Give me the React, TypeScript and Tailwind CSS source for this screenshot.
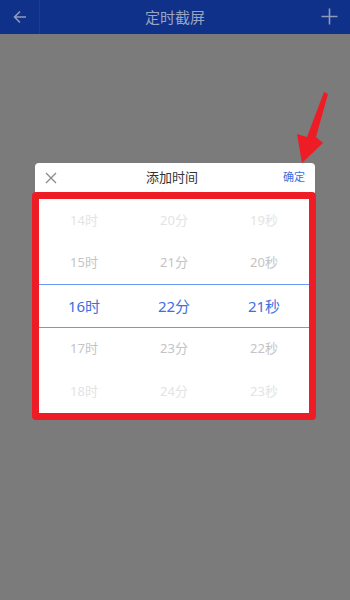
import React from "react";

const rows = [
  ["14时", "20分", "19秒"],
  ["15时", "21分", "20秒"],
  ["16时", "22分", "21秒"],
  ["17时", "23分", "22秒"],
  ["18时", "24分", "23秒"],
];

const rowStyle = [
  "h-[43px] text-[13px] text-[#e4e4e4]",
  "h-[42px] text-[13px] text-[#c4c4c4]",
  "h-[42px] text-[15px] text-[#3b70e0]",
  "h-[42px] text-[13px] text-[#c4c4c4]",
  "h-[43px] text-[13px] text-[#e4e4e4]",
];

export default function App() {
  return (
    <div
      className="relative flex h-[600px] w-[350px] flex-col overflow-hidden bg-[#7b7b7b]"
      style={{ fontFamily: '"Noto Sans", "Noto Sans CJK SC", sans-serif' }}
    >
      <header className="flex h-[34px] items-center bg-[#0f318a]">
        <div className="flex h-full w-[40px] items-center justify-center border-r border-[#1c3c92]">
          <svg width="16" height="16" viewBox="0 0 16 16" fill="none" stroke="#8e9bbd" strokeWidth="1.6">
            <path d="M14 8H2.5M8 2.5 2.5 8 8 13.5" />
          </svg>
        </div>
        <h1 className="flex-1 pr-[40px] text-center text-[15px] text-[#9aa4c2]">定时截屏</h1>
        <div className="absolute right-[12px] top-[8px]">
          <svg width="17" height="17" viewBox="0 0 17 17" fill="none" stroke="#8e9bbd" strokeWidth="1.6">
            <path d="M8.5 0.5v16M0.5 8.5h16" />
          </svg>
        </div>
      </header>

      <div className="ml-[35px] mt-[129px] w-[280px] rounded-[4px] bg-white">
        <div className="flex h-[29px] items-center px-[10px]">
          <svg width="12" height="12" viewBox="0 0 12 12" stroke="#8a8a8a" strokeWidth="1.3">
            <path d="M1 1l10 10M11 1 1 11" />
          </svg>
          <span className="flex-1 pl-[4px] text-center text-[13px] text-[#333]">添加时间</span>
          <span className="text-[11px] text-[#3b70e0]">确定</span>
        </div>
        <div className="-ml-[3px] -mr-[1px] mb-[-2px] rounded-[4px] border-[7px] border-[#ee1c25] bg-white">
          {rows.map((row, ri) => (
            <React.Fragment key={ri}>
              {(ri === 2 || ri === 3) && <div className="h-px bg-[#6a98f2]" />}
              <div className={`grid grid-cols-3 items-center ${rowStyle[ri]}`}>
                {row.map((t) => (
                  <span key={t} className="text-center">
                    {t}
                  </span>
                ))}
              </div>
            </React.Fragment>
          ))}
        </div>
      </div>

      <svg className="absolute left-[294px] top-[90px]" width="36" height="76" viewBox="0 0 36 76">
        <path d="M30 2 L34 4 L22 47 L29 53 L8 73 L3 44 L13 47 Z" fill="#ee1c25" />
      </svg>
    </div>
  );
}
